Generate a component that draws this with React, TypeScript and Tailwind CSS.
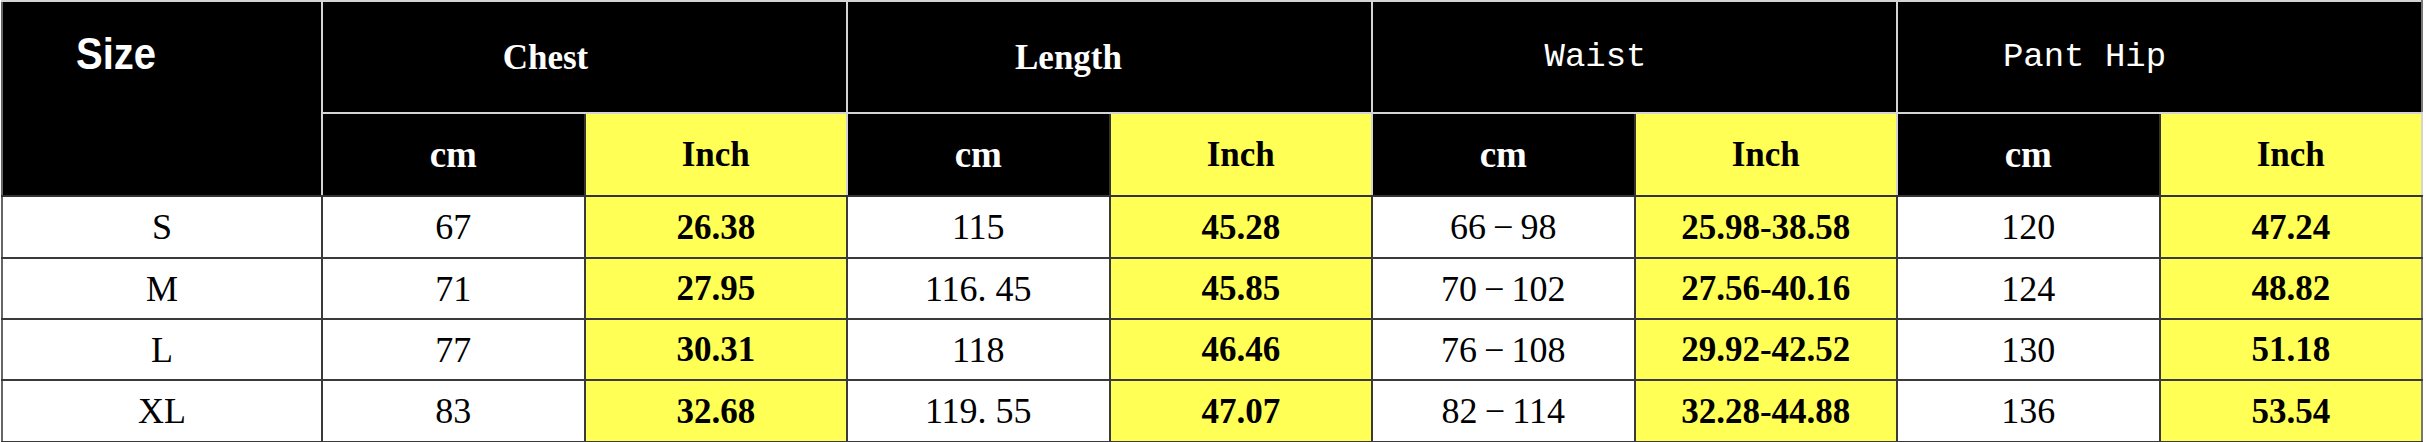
import React from "react";

type Row = {
  size: string;
  chest: [string, string];
  length: [string, string];
  waist: [string, string];
  hip: [string, string];
};

const rows: Row[] = [
  { size: "S", chest: ["67", "26.38"], length: ["115", "45.28"], waist: ["66\u2009\u2212\u200998", "25.98-38.58"], hip: ["120", "47.24"] },
  { size: "M", chest: ["71", "27.95"], length: ["116. 45", "45.85"], waist: ["70\u2009\u2212\u2009102", "27.56-40.16"], hip: ["124", "48.82"] },
  { size: "L", chest: ["77", "30.31"], length: ["118", "46.46"], waist: ["76\u2009\u2212\u2009108", "29.92-42.52"], hip: ["130", "51.18"] },
  { size: "XL", chest: ["83", "32.68"], length: ["119. 55", "47.07"], waist: ["82\u2009\u2212\u2009114", "32.28-44.88"], hip: ["136", "53.54"] },
];

const serif = "font-['Liberation_Serif',serif]";
const mono = "font-['Liberation_Mono',monospace]";

const groupTh = "bg-black text-white border-2 border-[#d4d4d4] align-middle text-center";
const cmTh = `bg-black text-white border-2 border-[#d4d4d4] border-r-[#333] border-b-[#333] text-center align-middle ${serif} font-bold text-[37px]`;
const inchTh = `bg-[#ffff55] text-black border-2 border-[#333] border-t-[#d4d4d4] border-r-[#d4d4d4] text-center align-middle ${serif} font-bold text-[35px]`;
const cmTd = `bg-white text-black border-2 border-[#3a3a3a] text-center align-middle ${serif} text-[36px]`;
const inchTd = `bg-[#ffff55] text-black border-2 border-[#3a3a3a] text-center align-middle ${serif} font-bold text-[35px]`;

export default function App() {
  return (
    <div className="w-[2426px] h-[442px] bg-white overflow-hidden">
      <table className="table-fixed border-collapse w-[2420px] ml-[1px] leading-none">
        <colgroup>
          <col className="w-[320px]" />
          {Array.from({ length: 8 }).map((_, i) => (
            <col key={i} className="w-[262.5px]" />
          ))}
        </colgroup>
        <thead>
          <tr className="h-[112px]">
            <th
              rowSpan={2}
              className="bg-black text-white border-2 border-[#d4d4d4] border-l-[#666] border-b-[#333] align-top text-left pl-[73px] pt-[30px] font-['Liberation_Sans',sans-serif] font-bold text-[40px]"
            >
              <span className="inline-block scale-y-110 origin-top">Size</span>
            </th>
            <th colSpan={2} className={`${groupTh} ${serif} font-bold text-[35px] pr-[78px]`}>
              Chest
            </th>
            <th colSpan={2} className={`${groupTh} ${serif} font-bold text-[35px] pr-[82px]`}>
              Length
            </th>
            <th colSpan={2} className={`${groupTh} ${mono} font-normal text-[34px] pr-[78px]`}>
              Waist
            </th>
            <th colSpan={2} className={`${groupTh} ${mono} font-normal text-[34px] pr-[150px] border-r-[#777]`}>
              Pant Hip
            </th>
          </tr>
          <tr className="h-[83px]">
            <th className={cmTh}>cm</th>
            <th className={inchTh}>Inch</th>
            <th className={cmTh}>cm</th>
            <th className={inchTh}>Inch</th>
            <th className={cmTh}>cm</th>
            <th className={inchTh}>Inch</th>
            <th className={cmTh}>cm</th>
            <th className={`${inchTh} border-r-[#777]`}>Inch</th>
          </tr>
        </thead>
        <tbody>
          {rows.map((r, i) => (
            <tr key={r.size} className={i === 0 || i === 3 ? "h-[62px]" : "h-[61px]"}>
              <td className={`${cmTd} border-l-[#666]`}>{r.size}</td>
              <td className={cmTd}>{r.chest[0]}</td>
              <td className={inchTd}>{r.chest[1]}</td>
              <td className={cmTd}>{r.length[0]}</td>
              <td className={inchTd}>{r.length[1]}</td>
              <td className={cmTd}>{r.waist[0]}</td>
              <td className={inchTd}>{r.waist[1]}</td>
              <td className={cmTd}>{r.hip[0]}</td>
              <td className={`${inchTd} border-r-[#777]`}>{r.hip[1]}</td>
            </tr>
          ))}
        </tbody>
      </table>
    </div>
  );
}
